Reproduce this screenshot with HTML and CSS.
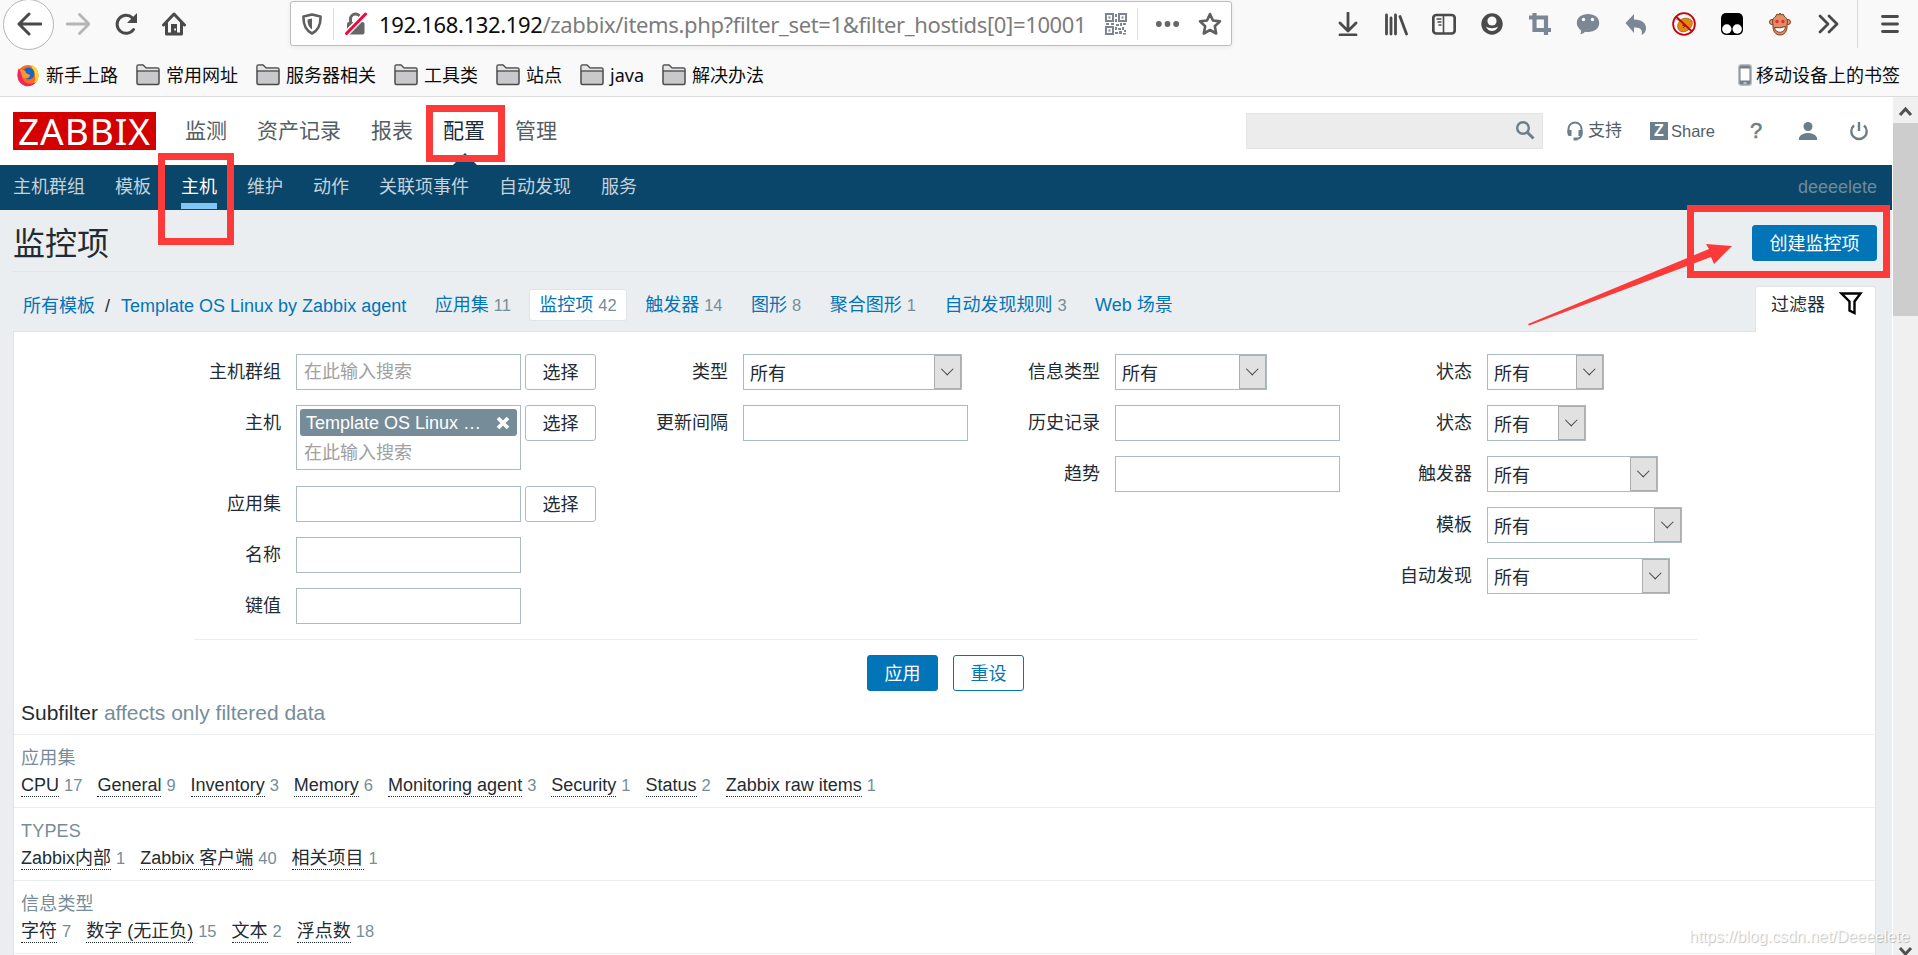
FILE: index.html
```
<!DOCTYPE html>
<html lang="zh-CN">
<head>
  <meta charset="UTF-8">
  <title>监控项</title>
  <link rel="stylesheet" href="styles.css">
</head>
<body>
  <!-- Browser toolbar -->
  <div class="browser">
    <div class="toolbar">
      <div class="nav-buttons">
        <span class="back"><svg width="26" height="24" viewBox="0 0 26 24"><path d="M25 12H3M13 2L3 12l10 10" fill="none" stroke="#4a4a4a" stroke-width="3" stroke-linecap="round" stroke-linejoin="round"/></svg></span>
        <svg width="24" height="24" viewBox="0 0 24 24"><path d="M1 12h21M13.500 2.500L23 12l-9.500 9.500" fill="none" stroke="#b5b5b5" stroke-width="2.800" stroke-linecap="round" stroke-linejoin="round"/></svg>
        <svg width="24" height="24" viewBox="0 0 24 24"><path d="M19.500 17.500A9 9 0 1 1 18.500 6" fill="none" stroke="#4a4a4a" stroke-width="3" stroke-linecap="round"/><path d="M23 1v10H13z" fill="#4a4a4a"/></svg>
        <svg width="24" height="24" viewBox="0 0 24 24"><path d="M1.500 13L12 2l10.500 11M4.500 11v11h15V11" fill="none" stroke="#4a4a4a" stroke-width="3" stroke-linecap="round" stroke-linejoin="round"/><path d="M9 12h6v10H9z" fill="#4a4a4a"/><path d="M12.300 16.500h1.700v2h-1.700z" fill="#fff"/></svg>
      </div>
      <div class="urlbar">
        <svg class="shield" width="20" height="22" viewBox="0 0 20 22"><path d="M10 1.500L18.500 3.500c.300 8-1.500 13.500-8.500 17C3 17 1.200 11.500 1.500 3.500z" fill="none" stroke="#5f5f5f" stroke-width="2.600" stroke-linejoin="round"/><path d="M10 5.500v11C6.500 14 5.500 11 5.500 6.500z" fill="#5f5f5f"/></svg>
        <svg class="lock" width="22" height="24" viewBox="0 0 22 24"><path d="M5.500 11V7a5 5 0 0 1 10 0v4" fill="none" stroke="#666" stroke-width="3"/><rect x="2" y="10" width="17.500" height="12.500" rx="2" fill="#666"/><path d="M1 22L20.500 2" stroke="#fff" stroke-width="6"/><path d="M1.500 21.500L20.500 2" stroke="#ff0039" stroke-width="3" stroke-linecap="round"/></svg>
        <span class="url"><b>192.168.132.192</b>/zabbix/items.php?filter_set=1&amp;filter_hostids[0]=10001</span>
        <svg class="qr" width="22" height="22" viewBox="0 0 22 22"><g fill="none" stroke="#7d8592" stroke-width="2"><path d="M1 1h7v7H1zM14 1h7v7h-7zM1 14h7v7H1z"/></g><g fill="#7d8592"><path d="M3.500 3.500h2v2h-2zM16.500 3.500h2v2h-2zM3.500 16.500h2v2h-2zM10 1h2v3h-2zM10 6h2v3h-2zM1 10h3v2H1zM6 10h3v2H6zM11 11h3v2h-3zM15 10h2v3h-2zM18 10h3v2h-3zM10 14h2v3h-2zM13 15h3v2h-3zM17 14h2v3h-2zM19 17h2v2h-2zM10 19h3v2h-3zM14 18h3v3h-3zM18 20h3v1.500h-3z"/></g></svg>
        <svg class="dots" width="26" height="8" viewBox="0 0 26 8"><g fill="#666"><circle cx="4" cy="4" r="3"/><circle cx="13" cy="4" r="3"/><circle cx="22" cy="4" r="3"/></g></svg>
        <svg class="star" width="24" height="24" viewBox="0 0 24 24"><path d="M12 2l3 6.500 7 .900-5.200 4.900 1.400 7.200L12 18l-6.200 3.500 1.400-7.200L2 9.400l7-.900z" fill="none" stroke="#5f5f5f" stroke-width="2.600" stroke-linejoin="round"/></svg>
      </div>
      <div class="tools">
        <svg viewBox="0 0 24 24"><path d="M12 1v18M4 11l8 8 8-8M4 23h16" fill="none" stroke="#4a4a4a" stroke-width="2.800" stroke-linecap="round" stroke-linejoin="round"/></svg>
        <svg viewBox="0 0 24 24"><path d="M2.500 3v19M7 6v16M11.500 3v19M16 4.500L22.500 22" fill="none" stroke="#4a4a4a" stroke-width="2.800" stroke-linecap="round"/></svg>
        <svg viewBox="0 0 24 24"><rect x="1.300" y="3" width="21.400" height="18.500" rx="3" fill="none" stroke="#4a4a4a" stroke-width="2.700"/><path d="M11.500 3v18" stroke="#4a4a4a" stroke-width="1.600"/><path d="M4.500 7h5M5.500 10h4M6.500 13h3" stroke="#4a4a4a" stroke-width="1.300"/></svg>
        <svg viewBox="0 0 24 24"><circle cx="12" cy="12" r="10.700" fill="#4a4a4a"/><circle cx="12" cy="9" r="4.600" fill="#f9f9fa"/><path d="M6 14.500c3 2.300 9 2.300 12 0-1 3-3.500 4.500-6 4.500s-5-1.500-6-4.500z" fill="#f9f9fa"/></svg>
        <svg viewBox="0 0 24 24"><path d="M6.500 1v17H18M1 5.500h17V23M18 18h5" fill="none" stroke="#7b8794" stroke-width="4.200"/></svg>
        <svg viewBox="0 0 24 24"><path d="M12 2c6.500 0 11.200 3.500 11.200 9S18.500 20 12 20c-1 0-2-.100-3-.300-1.500 1.500-3.500 2.700-5 2.500 1-1 1.200-2.200 1-3.800C2.500 16.500.800 14 .800 11 .800 5.500 5.500 2 12 2z" fill="#7b8794"/><circle cx="7.500" cy="7.500" r="1.700" fill="#fff"/><circle cx="16.500" cy="7.500" r="1.700" fill="#fff"/></svg>
        <svg viewBox="0 0 24 24"><path d="M10 2v5.500c8 0 12.500 4 12 9.500-.300 3-2 5-4.500 6 1.500-5-1-8-7.500-7.500V21L1.500 11z" fill="#7b8794"/></svg>
        <svg viewBox="0 0 24 24"><path d="M4 7l4 2c3-4 9-3.500 12 0 1 4-1 7-4 9-4 3-9 2-10-2-.700-3 0-5 2-7" fill="#e8870c" stroke="#9a5608" stroke-width=".800"/><path d="M10 13l3 1-2 2" fill="none" stroke="#633" stroke-width="1"/><circle cx="12" cy="12" r="10.900" fill="none" stroke="#c8000c" stroke-width="1.800"/><path d="M4 4.500L20 19.500" stroke="#c8000c" stroke-width="1.800"/></svg>
        <svg viewBox="0 0 24 24"><rect x="1" y="1" width="22" height="22" rx="5" fill="#000"/><circle cx="6.800" cy="17" r="4.700" fill="#fff"/><circle cx="17.200" cy="17" r="4.700" fill="#fff"/></svg>
        <svg viewBox="0 0 24 24"><g stroke="#7d3b1d" stroke-width="1"><circle cx="4" cy="10" r="2.500" fill="#e49a70"/><circle cx="20" cy="10" r="2.500" fill="#e49a70"/><path d="M8 4l1-2 2 1 1-2 1 2 2-1 1 2c3 2 4 5 3 8.500C19.500 20 16 23 12 23s-7.500-3-7-10.500C4 9 5 6 8 4z" fill="#dd9068"/></g><circle cx="9" cy="9.500" r="1.700" fill="#f22"/><circle cx="15" cy="9.500" r="1.700" fill="#f22"/><path d="M6.500 15.500q5.500 1 11-1c0 7-10 8-11 1z" fill="#fff" stroke="#7d3b1d" stroke-width="1"/></svg>
        <svg viewBox="0 0 24 24"><path d="M4 4l8 8-8 8M13 4l8 8-8 8" fill="none" stroke="#4a4a4a" stroke-width="2.800" stroke-linecap="round" stroke-linejoin="round"/></svg>
      </div>
      <div class="burger"><svg width="20" height="20" viewBox="0 0 20 20"><path d="M2.500 2.500h15M2.500 10h15M2.500 17.500h15" stroke="#4a4a4a" stroke-width="2.800" stroke-linecap="round"/></svg></div>
    </div>
    <div class="bookmarks">
      <span class="bookmark first"><svg width="24" height="24" viewBox="0 0 24 24"><circle cx="12" cy="12.500" r="10.500" fill="#ff6a1c"/><path d="M15 2c5 1 8.500 6 7.500 12-1 5-5 9-10.500 9 6-1 8-5 7-10-.500-4-2.500-6-4-11z" fill="#ffd52b"/><path d="M3 5c-3 6-2 15 6 18 5 1 9-1 11-4-8 4-14 0-14-7z" fill="#f0245e"/><circle cx="12.500" cy="10.500" r="6" fill="#1765c7"/><path d="M4 7c4-1 6 1 6 3l4 2c0 4-6 5-8 1z" fill="#ff9427"/></svg>新手上路</span>
      <span class="bookmark"><svg class="folder" viewBox="0 0 24 24"><path d="M1 20V3.500Q1 2 2.500 2H7l3 3h11.500Q23 5 23 6.500V20q0 1.500-1.500 1.500h-19Q1 21.500 1 20z" fill="#c9c9cb" stroke="#4a4a4a" stroke-width="1.500"/><path d="M1.700 2.700h5l3 3h12.500v2H1.700z" fill="#e4e4e5"/><path d="M1 8h22" stroke="#4a4a4a" stroke-width="1.300"/></svg>常用网址</span>
      <span class="bookmark"><svg class="folder" viewBox="0 0 24 24"><path d="M1 20V3.500Q1 2 2.500 2H7l3 3h11.500Q23 5 23 6.500V20q0 1.500-1.500 1.500h-19Q1 21.500 1 20z" fill="#c9c9cb" stroke="#4a4a4a" stroke-width="1.500"/><path d="M1.700 2.700h5l3 3h12.500v2H1.700z" fill="#e4e4e5"/><path d="M1 8h22" stroke="#4a4a4a" stroke-width="1.300"/></svg>服务器相关</span>
      <span class="bookmark"><svg class="folder" viewBox="0 0 24 24"><path d="M1 20V3.500Q1 2 2.500 2H7l3 3h11.500Q23 5 23 6.500V20q0 1.500-1.500 1.500h-19Q1 21.500 1 20z" fill="#c9c9cb" stroke="#4a4a4a" stroke-width="1.500"/><path d="M1.700 2.700h5l3 3h12.500v2H1.700z" fill="#e4e4e5"/><path d="M1 8h22" stroke="#4a4a4a" stroke-width="1.300"/></svg>工具类</span>
      <span class="bookmark"><svg class="folder" viewBox="0 0 24 24"><path d="M1 20V3.500Q1 2 2.500 2H7l3 3h11.500Q23 5 23 6.500V20q0 1.500-1.500 1.500h-19Q1 21.500 1 20z" fill="#c9c9cb" stroke="#4a4a4a" stroke-width="1.500"/><path d="M1.700 2.700h5l3 3h12.500v2H1.700z" fill="#e4e4e5"/><path d="M1 8h22" stroke="#4a4a4a" stroke-width="1.300"/></svg>站点</span>
      <span class="bookmark"><svg class="folder" viewBox="0 0 24 24"><path d="M1 20V3.500Q1 2 2.500 2H7l3 3h11.500Q23 5 23 6.500V20q0 1.500-1.500 1.500h-19Q1 21.500 1 20z" fill="#c9c9cb" stroke="#4a4a4a" stroke-width="1.500"/><path d="M1.700 2.700h5l3 3h12.500v2H1.700z" fill="#e4e4e5"/><path d="M1 8h22" stroke="#4a4a4a" stroke-width="1.300"/></svg>java</span>
      <span class="bookmark"><svg class="folder" viewBox="0 0 24 24"><path d="M1 20V3.500Q1 2 2.500 2H7l3 3h11.500Q23 5 23 6.500V20q0 1.500-1.500 1.500h-19Q1 21.500 1 20z" fill="#c9c9cb" stroke="#4a4a4a" stroke-width="1.500"/><path d="M1.700 2.700h5l3 3h12.500v2H1.700z" fill="#e4e4e5"/><path d="M1 8h22" stroke="#4a4a4a" stroke-width="1.300"/></svg>解决办法</span>
      <span class="bookmark mobile"><svg width="14" height="24" viewBox="0 0 14 24"><rect x=".700" y="1.700" width="12.600" height="20.600" rx="2.500" fill="#75808a" stroke="#b9bfc4" stroke-width="1.400"/><path d="M2.500 5.500h9v12h-9z" fill="#fff"/><path d="M5.500 20h3" stroke="#fff"/></svg>移动设备上的书签</span>
    </div>
  </div>

  <div class="viewport">
    <div class="page">
      <div class="header">
        <div class="logo"><span>ZABBIX</span></div>
        <ul class="top-nav">
          <li>监测</li>
          <li>资产记录</li>
          <li>报表</li>
          <li class="selected">配置</li>
          <li>管理</li>
        </ul>
        <div class="search"><svg width="20" height="20" viewBox="0 0 20 20"><circle cx="8" cy="8" r="5.800" fill="none" stroke="#6b7f8b" stroke-width="2.400"/><path d="M12 12l6.500 6.500" stroke="#6b7f8b" stroke-width="3"/></svg></div>
        <span class="link support"><svg width="18" height="20" viewBox="0 0 18 20"><path d="M2.500 12V8a6.500 6.500 0 0 1 13 0v5c0 3-1.500 4.500-5 5" fill="none" stroke="#6b7f8b" stroke-width="2"/><path d="M1.500 9h4v6h-2q-2 0-2-2zM16.500 9h-4v6h2q2 0 2-2z" fill="#6b7f8b"/><path d="M7.500 16.500h4v3h-4z" fill="#6b7f8b"/></svg>支持</span>
        <span class="link share"><i>Z</i>Share</span>
        <span class="link help">?</span>
        <svg class="user" width="18" height="18" viewBox="0 0 18 18"><circle cx="9" cy="4.500" r="4.500" fill="#6b7f8b"/><path d="M0 18v-2.500C1.500 12.500 5 11 9 11s7.500 1.500 9 4.500V18z" fill="#6b7f8b"/></svg>
        <svg class="power" width="20" height="20" viewBox="0 0 20 20"><path d="M5 4.500a7.700 7.700 0 1 0 10 0M10 1v9" fill="none" stroke="#6b7f8b" stroke-width="2.400"/></svg>
      </div>
      <div class="sub-nav">
        <ul>
          <li>主机群组</li>
          <li>模板</li>
          <li class="selected">主机</li>
          <li>维护</li>
          <li>动作</li>
          <li>关联项事件</li>
          <li>自动发现</li>
          <li>服务</li>
        </ul>
        <span class="server-name">deeeelete</span>
      </div>

      <div class="title-bar">
        <h1>监控项</h1>
        <button class="btn">创建监控项</button>
      </div>

      <div class="tabs">
        <div class="crumbs">
          <a>所有模板</a><span class="slash">/</span><a>Template OS Linux by Zabbix agent</a>
        </div>
        <ul class="object-nav">
          <li><a>应用集</a><sup>11</sup></li>
          <li class="selected"><a>监控项</a><sup>42</sup></li>
          <li><a>触发器</a><sup>14</sup></li>
          <li><a>图形</a><sup>8</sup></li>
          <li><a>聚合图形</a><sup>1</sup></li>
          <li><a>自动发现规则</a><sup>3</sup></li>
          <li><a>Web 场景</a></li>
        </ul>
        <div class="filter-tab">过滤器<svg width="24" height="24" viewBox="0 0 24 24"><path d="M2.500 2.500h19l-6 8V22l-5-2.500v-9z" fill="none" stroke="#000" stroke-width="2.400"/></svg></div>
      </div>

      <div class="filter">
        <div class="filter-form">
          <div class="col col-first">
            <div class="row"><label>主机群组</label><div class="multiselect"><span class="hint">在此输入搜索</span></div><button class="btn-grey">选择</button></div>
            <div class="row row-tall"><label>主机</label><div class="multiselect"><span class="chip">Template OS Linux …<svg width="14" height="14" viewBox="0 0 14 14"><path d="M2 2l10 10M12 2L2 12" stroke="#fff" stroke-width="3.800"/></svg></span><span class="hint">在此输入搜索</span></div><button class="btn-grey">选择</button></div>
            <div class="row"><label>应用集</label><input type="text"><button class="btn-grey">选择</button></div>
            <div class="row"><label>名称</label><input type="text"></div>
            <div class="row"><label>键值</label><input type="text"></div>
          </div>
          <div class="col">
            <div class="row"><label>类型</label><div class="select w-type">所有<span></span></div></div>
            <div class="row"><label>更新间隔</label><input type="text"></div>
          </div>
          <div class="col">
            <div class="row"><label>信息类型</label><div class="select w-info">所有<span></span></div></div>
            <div class="row"><label>历史记录</label><input type="text"></div>
            <div class="row"><label>趋势</label><input type="text"></div>
          </div>
          <div class="col">
            <div class="row"><label>状态</label><div class="select w-state">所有<span></span></div></div>
            <div class="row"><label>状态</label><div class="select w-status">所有<span></span></div></div>
            <div class="row"><label>触发器</label><div class="select w-trigger">所有<span></span></div></div>
            <div class="row"><label>模板</label><div class="select w-template">所有<span></span></div></div>
            <div class="row"><label>自动发现</label><div class="select w-discovery">所有<span></span></div></div>
          </div>
        </div>
        <div class="filter-buttons">
          <button class="btn">应用</button>
          <button class="btn btn-alt">重设</button>
        </div>

        <h4>Subfilter <span>affects only filtered data</span></h4>
        <div class="subfilter">
          <h3>应用集</h3>
          <p><span><a>CPU</a>17</span><span><a>General</a>9</span><span><a>Inventory</a>3</span><span><a>Memory</a>6</span><span><a>Monitoring agent</a>3</span><span><a>Security</a>1</span><span><a>Status</a>2</span><span><a>Zabbix raw items</a>1</span></p>
        </div>
        <div class="subfilter">
          <h3>TYPES</h3>
          <p><span><a>Zabbix内部</a>1</span><span><a>Zabbix 客户端</a>40</span><span><a>相关项目</a>1</span></p>
        </div>
        <div class="subfilter">
          <h3>信息类型</h3>
          <p><span><a>字符</a>7</span><span><a>数字 (无正负)</a>15</span><span><a>文本</a>2</span><span><a>浮点数</a>18</span></p>
        </div>
        <div class="subfilter"></div>
      </div>
    </div>

    <div class="scrollbar">
      <svg width="25" height="26" viewBox="0 0 25 26"><path d="M7 18l5.500-6 5.500 6" fill="none" stroke="#505050" stroke-width="3"/></svg>
      <div class="thumb"></div>
      <svg class="down" width="25" height="12" viewBox="0 0 25 12"><path d="M7 5l5.500 6L18 5" fill="none" stroke="#505050" stroke-width="3"/></svg>
    </div>
  </div>

  <!-- Red marks drawn over the page -->
  <div class="mark mark-menu"></div>
  <div class="mark mark-hosts"></div>
  <div class="mark mark-create"></div>
  <svg class="arrow" width="206" height="84" viewBox="0 0 206 84"><path d="M0 82L181 7l-3-5 26 2-18 18-3-7L1 83.500z" fill="#fc3a3a"/></svg>
  <div class="watermark">https://blog.csdn.net/Deeeelete</div>
</body>
</html>
```

FILE: styles.css
```
* {
  box-sizing: border-box;
}
body {
  margin: 0;
  width: 1918px;
  height: 955px;
  overflow: hidden;
  position: relative;
  font-family: "Liberation Sans", "Noto Sans CJK SC", sans-serif;
  font-size: 18px;
  line-height: 24px;
  color: #1f2c33;
  background: #ebeef0;
}
ul, h1, h3, h4, p {
  margin: 0;
  padding: 0;
  list-style: none;
  font-weight: normal;
}
svg {
  display: block;
  flex: none;
}

/* Browser chrome */
.browser {
  height: 97px;
  background: #f9f9fa;
  border-bottom: 1px solid #dcdcdc;
  overflow: hidden;
}
.toolbar {
  display: flex;
  height: 48px;
}
.nav-buttons {
  display: flex;
  align-items: center;
  gap: 24px;
  width: 290px;
}
.back {
  display: flex;
  align-items: center;
  justify-content: center;
  flex: none;
  width: 51px;
  height: 51px;
  margin-left: 3px;
  margin-right: -12px;
  border: 1px solid #b5b5b5;
  border-radius: 50%;
  background: #fff;
}
.urlbar {
  display: flex;
  align-items: center;
  width: 942px;
  height: 45px;
  margin-top: 1px;
  border: 1px solid #bdbdbd;
  border-radius: 3px;
  background: #fff;
  box-shadow: 0 1px 4px rgba(0, 0, 0, 0.08);
}
.shield {
  margin-left: 11px;
}
.lock {
  margin-left: 11px;
  padding-left: 11px;
  width: 34px;
  height: 32px;
  border-left: 1px solid #ddd;
}
.url {
  width: 704px;
  margin-left: 12px;
  font-family: "Noto Sans", sans-serif;
  font-size: 22px;
  letter-spacing: -0.35px;
  white-space: nowrap;
  color: #7c7c7c;
}
.url b {
  font-weight: normal;
  color: #0c0c0d;
}
.qr {
  margin-left: 22px;
}
.dots {
  width: 43px;
  height: 32px;
  margin-left: 10px;
  padding-left: 17px;
  border-left: 1px solid #ddd;
}
.star {
  margin-left: 18px;
}
.tools {
  display: flex;
  align-items: center;
  gap: 24px;
  margin-left: 104px;
}
.tools svg {
  width: 24px;
  height: 24px;
}
.burger {
  display: flex;
  align-items: center;
  margin-left: 17px;
  padding-left: 22px;
  border-left: 1px solid #d8d8d8;
}
.bookmarks {
  display: flex;
  align-items: center;
  gap: 18px;
  height: 48px;
  padding: 6px 18px 0 16px;
  font-family: "Noto Sans", "Noto Sans CJK SC", sans-serif;
  color: #0c0c0d;
}
.bookmark {
  display: flex;
  align-items: center;
  gap: 6px;
  white-space: nowrap;
}
.folder {
  width: 24px;
  height: 24px;
}
.bookmark.mobile {
  gap: 4px;
  margin-left: auto;
}

.viewport {
  display: flex;
  height: 858px;
  overflow: hidden;
}
.page {
  width: 1892px;
}

/* Header */
.header {
  display: flex;
  align-items: center;
  height: 68px;
  padding-left: 13px;
  background: #fff;
}
.logo {
  width: 143px;
  height: 38px;
  background: #d40000;
  color: #fff;
  font-family: "Noto Sans", sans-serif;
  font-size: 37px;
  line-height: 38px;
  letter-spacing: 1px;
  text-align: center;
}
.top-nav {
  display: flex;
  gap: 30px;
  width: 1061px;
  margin-left: 29px;
  font-size: 21px;
  color: #545e65;
}
.top-nav .selected {
  position: relative;
  color: #1f2c33;
}
.top-nav .selected::after {
  content: "";
  position: absolute;
  left: 10px;
  top: 34px;
  border: 12px solid transparent;
  border-top: 0;
  border-bottom-color: #0a466a;
}
.search {
  display: flex;
  align-items: center;
  justify-content: flex-end;
  width: 297px;
  height: 36px;
  padding-right: 7px;
  background: #ececec;
  border: 1px solid #e2e4e6;
}
.search svg {
  margin-top: -2px;
}
.link {
  display: flex;
  align-items: center;
  font-size: 17px;
  color: #545e65;
}
.support {
  width: 59px;
  margin-left: 23px;
  gap: 4px;
}
.share {
  width: 66px;
  margin-left: 25px;
  gap: 3px;
  font-size: 16.5px;
}
.share i {
  width: 18px;
  height: 18px;
  background: #6b7f8b;
  color: #fff;
  font: bold 16px/18px "Liberation Sans", sans-serif;
  text-align: center;
}
.help {
  margin-left: 34px;
  font-size: 22px;
  color: #6b7f8b;
  -webkit-text-stroke: 0.6px #6b7f8b;
}
.user {
  margin-left: 37px;
}
.power {
  margin-left: 32px;
}
.sub-nav {
  display: flex;
  justify-content: space-between;
  height: 45px;
  padding: 0 15px 0 13px;
  background: #0a466a;
  color: #c3d2dc;
  line-height: 44px;
}
.sub-nav ul {
  display: flex;
  gap: 30px;
}
.sub-nav .selected {
  height: 44px;
  color: #fff;
  border-bottom: 6px solid #7fc6f5;
}
.server-name {
  color: #6d8a9c;
}

/* Title and tabs */
.title-bar {
  display: flex;
  justify-content: space-between;
  height: 62px;
  margin: 0 15px 0 13px;
  padding-top: 15px;
  border-bottom: 1px solid #dfe4e7;
}
h1 {
  font-size: 32px;
  line-height: 39px;
}
button {
  height: 36px;
  padding: 1px 16.5px 0;
  font: inherit;
  line-height: 34px;
  white-space: nowrap;
  border: 1px solid #0275b8;
  border-radius: 3px;
}
.btn {
  background: #0275b8;
  color: #fff;
}
.btn-alt {
  background: #fff;
  color: #0275b8;
}
.btn-grey {
  width: 71px;
  margin-left: 4px;
  padding: 1px 0 0;
  background: #fff;
  color: #1f2c33;
  border-color: #acbbc2;
}
.tabs {
  display: flex;
  height: 59px;
  padding: 14px 16px 0 23px;
  color: #1f2c33;
}
.tabs a {
  color: #0275b8;
}
.crumbs {
  padding-top: 8px;
  white-space: nowrap;
}
.slash {
  margin: 0 11px 0 10px;
}
.object-nav {
  display: flex;
  gap: 8.5px;
  margin: 3px 0 0 18.5px;
}
.object-nav li {
  height: 32px;
  padding: 0 9px;
  line-height: 30px;
  border: 1px solid transparent;
  border-radius: 3px;
  white-space: nowrap;
}
.object-nav .selected {
  background: #fff;
  border-color: #dfe4e7;
}
.object-nav sup {
  margin-left: 5px;
  font-size: 16.5px;
  line-height: inherit;
  vertical-align: baseline;
  color: #768d99;
}
.filter-tab {
  display: flex;
  gap: 14px;
  width: 121px;
  height: 46px;
  margin-left: auto;
  padding: 6px 13px 0 15px;
  background: #fff;
  border: 1px solid #dfe4e7;
  border-bottom: 0;
  border-radius: 3px 3px 0 0;
  white-space: nowrap;
}
.filter-tab svg {
  margin-top: -2px;
}

/* Filter */
.filter {
  height: 640px;
  margin: 0 16px 0 13px;
  background: #fff;
  border: 1px solid #dfe4e7;
}
.filter-form {
  display: grid;
  grid-template-columns: 402px 372px 372px 357px;
  width: 1503px;
  height: 308px;
  margin-left: 180px;
  padding-top: 22px;
  border-bottom: 1px solid #ebeef0;
}
.row {
  display: flex;
  height: 51px;
}
.row-tall {
  height: 81px;
}
.col label {
  width: 132px;
  margin-right: 15px;
  text-align: right;
  line-height: 37px;
}
.col-first label {
  width: 87px;
}
.col input {
  width: 225px;
  height: 36px;
  border: 1px solid #acbbc2;
  background: #fff;
}
.multiselect {
  align-self: flex-start;
  width: 225px;
  padding: 3px;
  border: 1px solid #acbbc2;
}
.hint {
  display: block;
  padding-left: 4px;
  line-height: 28px;
  color: #a0a0a0;
}
.chip {
  display: flex;
  justify-content: space-between;
  align-items: center;
  height: 27px;
  margin-bottom: 4px;
  padding: 0 7px 0 6px;
  background: #768d99;
  border-radius: 3px;
  color: #fff;
}
.row-tall .hint {
  line-height: 26px;
}
.select {
  display: flex;
  justify-content: space-between;
  height: 36px;
  padding-left: 6px;
  line-height: 38px;
  border: 1px solid #acbbc2;
}
.select span {
  width: 27px;
  height: 34px;
  padding: 10px 0 0 8px;
  background: #e1e1e1;
  border: 1px solid #adadad;
}
.select span::before {
  content: "";
  display: block;
  width: 7.5px;
  height: 7.5px;
  border: solid #444;
  border-width: 0 1.5px 1.5px 0;
  transform: translateY(-1.5px) rotate(45deg);
}
.w-type {
  width: 219px;
}
.w-info {
  width: 152px;
}
.w-state {
  width: 117px;
}
.w-status {
  width: 99px;
}
.w-trigger {
  width: 171px;
}
.w-template {
  width: 195px;
}
.w-discovery {
  width: 183px;
}
.filter-buttons {
  display: flex;
  justify-content: center;
  gap: 15px;
  padding: 15px 0 0 2px;
}
h4 {
  height: 43px;
  padding: 10px 0 0 7px;
  font-size: 21px;
}
h4 span {
  color: #768d99;
}
.subfilter {
  height: 73px;
  padding: 11px 0 0 7px;
  border-top: 1px solid #ebeef0;
}
.subfilter h3 {
  font-size: 18px;
  letter-spacing: 0.2px;
  color: #768d99;
}
.subfilter p {
  display: flex;
  gap: 15px;
  padding-top: 3px;
  font-size: 16.5px;
  color: #768d99;
}
.subfilter a {
  display: inline-block;
  height: 24px;
  margin-right: 5px;
  font-size: 18px;
  color: #1f2c33;
  border-bottom: 1px dotted #1f2c33;
}

/* Scrollbar */
.scrollbar {
  display: flex;
  flex-direction: column;
  width: 26px;
  background: #f0f0f0;
  border-left: 1px solid #fff;
}
.thumb {
  height: 193px;
  background: #cdcdcd;
}
.scrollbar .down {
  margin-top: auto;
}

.mark {
  position: absolute;
  border: 7px solid #fc3a3a;
}
.mark-menu {
  left: 426px;
  top: 105px;
  width: 79px;
  height: 57px;
}
.mark-hosts {
  left: 158px;
  top: 153px;
  width: 76px;
  height: 92px;
}
.mark-create {
  left: 1687px;
  top: 205px;
  width: 203px;
  height: 73px;
}
.arrow {
  position: absolute;
  left: 1528px;
  top: 242px;
}
.watermark {
  position: absolute;
  left: 1689px;
  top: 925px;
  font-size: 16px;
  color: rgba(255, 255, 255, 0.8);
  text-shadow: 1px 1px 1px rgba(0, 0, 0, 0.25);
}
```
